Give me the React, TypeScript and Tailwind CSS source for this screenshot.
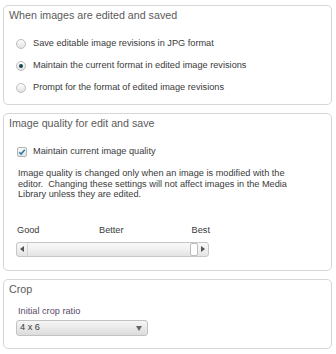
import React from 'react';

function Radio({ checked }: { checked?: boolean }) {
  return (
    <span className="flex h-[10px] w-[10px] items-center justify-center rounded-full border border-[#bdbdbd] bg-gradient-to-b from-[#fdfdfd] to-[#e2e2e2]">
      {checked && <span className="h-[4px] w-[4px] rounded-full bg-[#1c4756]" />}
    </span>
  );
}

function Panel({ title, className, children }: { title: string; className: string; children: React.ReactNode }) {
  return (
    <div className={`w-[329px] ml-[3px] rounded-[5px] border border-[#d6d6d6] bg-white ${className}`}>
      <div className="flex h-[18px] items-center pl-[5px] text-[10.7px] text-[#5a5a5a]">{title}</div>
      {children}
    </div>
  );
}

export default function App() {
  return (
    <div className="h-[354px] w-[336px] overflow-hidden bg-white pt-[5px] text-[#3a3a3a]" style={{ fontFamily: '"Liberation Sans", Arial, sans-serif' }}>
      {/* When images are edited and saved */}
      <Panel title="When images are edited and saved" className="h-[100px]">
        <div className="mt-[9px] pl-[12px] text-[9.2px]">
          <div className="flex h-[22px] items-center gap-[7px]">
            <Radio />
            <span>Save editable image revisions in JPG format</span>
          </div>
          <div className="flex h-[22px] items-center gap-[7px]">
            <Radio checked />
            <span>Maintain the current format in edited image revisions</span>
          </div>
          <div className="flex h-[22px] items-center gap-[7px]">
            <Radio />
            <span>Prompt for the format of edited image revisions</span>
          </div>
        </div>
      </Panel>

      {/* Image quality */}
      <Panel title="Image quality for edit and save" className="mt-[8px] h-[158px]">
        <div className="mt-[11px] flex h-[18px] items-center gap-[6px] pl-[13px] text-[9.2px]">
          <span className="flex h-[10px] w-[10px] items-center justify-center rounded-[2px] border border-[#b4b4b4] bg-gradient-to-b from-[#fafafa] to-[#e4e4e4]">
            <svg width="8" height="8" viewBox="0 0 8 8">
              <path d="M1.3 4.2 L3.1 6 L6.8 1.8" fill="none" stroke="#2a7ea3" strokeWidth="1.6" />
            </svg>
          </span>
          <span>Maintain current image quality</span>
        </div>
        <div className="mt-[7px] pl-[14px] text-[9.2px] leading-[10.5px] whitespace-pre">
          <div>Image quality is changed only when an image is modified with the</div>
          <div>{'editor.  Changing these settings will not affect images in the Media'}</div>
          <div>Library unless they are edited.</div>
        </div>
        <div className="relative mt-[24px] ml-[13px] h-[12px] w-[193px] text-[9.2px]">
          <span className="absolute left-0 top-0">Good</span>
          <span className="absolute left-[82px] top-0">Better</span>
          <span className="absolute right-0 top-0">Best</span>
        </div>
        <div className="mt-[6px] ml-[12px] flex h-[15px] w-[193px] overflow-hidden rounded-[3px] border border-[#c6c6c6] bg-gradient-to-b from-[#f9f9f9] via-[#f0f0f0] to-[#e3e3e3]">
          <div className="flex w-[11px] items-center justify-center border-r border-[#d4d4d4]">
            <span className="h-0 w-0 border-y-[3px] border-r-[4px] border-y-transparent border-r-[#555]" />
          </div>
          <div className="flex-1" />
          <div className="w-[8px] rounded-[2px] border border-[#bdbdbd] bg-white" />
          <div className="flex w-[10px] items-center justify-center">
            <span className="h-0 w-0 border-y-[3px] border-l-[4px] border-y-transparent border-l-[#555]" />
          </div>
        </div>
      </Panel>

      {/* Crop */}
      <Panel title="Crop" className="mt-[8px] h-[70px]">
        <div className="mt-[8px] flex h-[12px] items-center pl-[14px] text-[9.2px] text-[#5a4a6c]">Initial crop ratio</div>
        <div className="mt-[2px] ml-[12px] flex h-[16px] w-[132px] items-center justify-between rounded-[3px] border border-[#c2c2c2] bg-gradient-to-b from-[#f6f6f6] to-[#dcdcdc] pl-[3px] pr-[5px] text-[9.2px]">
          <span>4 x 6</span>
          <span className="h-0 w-0 border-x-[3.5px] border-t-[5px] border-x-transparent border-t-[#666]" />
        </div>
      </Panel>
    </div>
  );
}
